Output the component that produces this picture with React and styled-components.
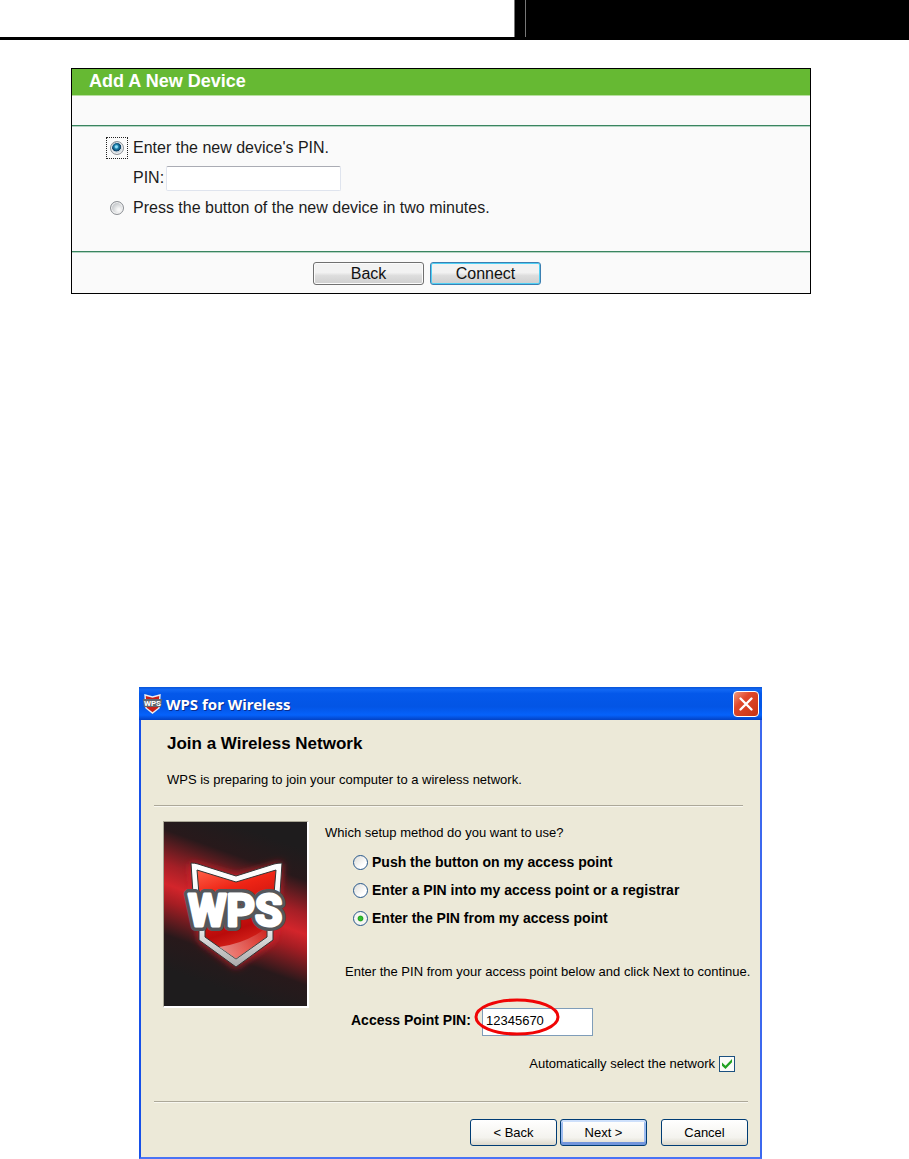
import React from "react";
import styled, { createGlobalStyle, css } from "styled-components";

const GlobalStyle = createGlobalStyle`
  * { box-sizing: border-box; }
  body { margin: 0; background: #fff; color: #000; font-family: "Liberation Sans", Arial, sans-serif; }
  button, input { font: inherit; margin: 0; }
  h1, h2, p { margin: 0; }
`;

const PageHeader = styled.header`
  display: grid;
  grid-template-columns: 514fr 11fr 384fr;
  height: 40px;
  border-bottom: 3px solid #000;
`;

const HeaderCell = styled.div`
  background: ${(p) => (p.$dark ? "#000" : "#fff")};
  border-left: ${(p) => (p.$dark ? "1px solid #777" : "0")};
`;

/* Router page: add a device */

const DevicePanel = styled.form`
  margin: 28px 98px 0 71px;
  border: 1px solid #000;
  background: #fafafa;
  font-size: 16px;
  color: #1c1c1c;
`;

const PanelTitle = styled.h1`
  height: 27px;
  padding-left: 17px;
  background: #66b933;
  border-bottom: 1px solid #b7de9f;
  color: #fff;
  font-size: 18px;
  line-height: 25px;
`;

const PanelBody = styled.div`
  margin-top: 29px;
  height: 127px;
  padding: 7px 0 0 34px;
  border: solid #3a8560;
  border-width: 1px 0;
  box-shadow: 0 1px #b5d5c4, inset 0 1px #b5d5c4;
`;

const PanelRow = styled.div`
  display: flex;
  align-items: center;
  height: 30px;
  padding-left: ${(p) => (p.$indented ? "27px" : "0")};
  gap: ${(p) => (p.$indented ? "2px" : "5px")};
`;

const FocusBox = styled.span`
  display: flex;
  align-items: center;
  justify-content: center;
  width: 22px;
  height: 22px;
  border: 1px dotted ${(p) => (p.$active ? "#222" : "transparent")};
`;

const PanelRadio = styled.input`
  appearance: none;
  width: 14px;
  height: 14px;
  border: 1px solid #8b8f94;
  border-radius: 50%;
  background: radial-gradient(circle at 65% 65%, #f8f8f8 10%, #b9bdc1 80%);
  box-shadow: inset 0 0 0 1px #f4f4f4;
  &:checked {
    background: radial-gradient(circle at 45% 40%, #8fdcf7 0 10%, #1d83ae 22%, #0b3a60 45%, #c9d4dc 50%);
  }
`;

const PanelInput = styled.input`
  width: 175px;
  height: 25px;
  padding: 0 4px;
  border: 1px solid #dfe4ee;
  border-top-color: #aaacb4;
  border-radius: 2px;
  background: #fff;
`;

const PanelFooter = styled.div`
  display: flex;
  justify-content: center;
  gap: 6px;
  padding: 10px 28px 8px 0;
`;

const PanelButton = styled.button`
  width: 111px;
  height: 23px;
  padding: 0;
  border: 1px solid ${(p) => (p.$primary ? "#3c7fb1" : "#707070")};
  border-radius: 3px;
  background: linear-gradient(#f2f2f2 0 45%, #dddddd 60%, #cfcfcf);
  box-shadow: inset 0 0 0 1px ${(p) => (p.$primary ? "#4fd0f5" : "#fbfbfb")};
  line-height: 20px;
  color: #111;
`;

/* Desktop wizard */

const Dialog = styled.section`
  margin: 393px 147px 0 139px;
  border: 2px solid #1650e8;
  border-top: 0;
  border-right-color: #3c68ee;
  border-bottom-color: #4a74f5;
  background: #ece9d8;
  font-family: "Liberation Sans", Arial, sans-serif;
  font-size: 13px;
  line-height: 16px;
`;

const TitleBar = styled.header`
  display: flex;
  align-items: center;
  height: 33px;
  margin: 0 -2px;
  padding: 1px 3px 0 4px;
  gap: 4px;
  background: linear-gradient(#0a55d8 0, #1268f4 8%, #0458ea 20%, #0355e5 60%, #0562fb 85%, #0342c4 100%);
`;

const TitleText = styled.h2`
  flex: 1;
  color: #fff;
  font-family: "Noto Sans", sans-serif;
  font-size: 15px;
  line-height: 20px;
  text-shadow: 1px 1px #0a2c8c;
`;

const CloseButton = styled.button`
  display: flex;
  align-items: center;
  justify-content: center;
  width: 26px;
  height: 26px;
  padding: 0;
  border: 1px solid #fff;
  border-radius: 4px;
  background: linear-gradient(135deg, #f09a80, #e1482b 35%, #c63313);
`;

const Intro = styled.div`
  margin: 0 17px 0 13px;
  padding: 15px 13px 17px;
  border-bottom: 1px solid #aca899;
  box-shadow: 0 1px #f8f7f0;
`;

const IntroTitle = styled.h2`
  margin-bottom: 19px;
  font-size: 17px;
  line-height: 18px;
`;

const WizardBody = styled.div`
  display: flex;
  height: 295px;
  padding: 15px 17px 0 22px;
  gap: 16px;
`;

const Artwork = styled.svg`
  display: block;
  flex: none;
  width: 146px;
  height: 187px;
  border: 1px solid #aaa796;
  border-right: 2px solid #fff;
  border-bottom: 2px solid #fff;
`;

const WizardForm = styled.div`
  flex: 1;
  min-width: 0;
  padding-top: 4px;
`;

const MethodList = styled.div`
  padding: 7px 0 0 28px;
  margin-bottom: 32px;
`;

const boldText = css`
  font-size: 14px;
  font-weight: 700;
`;

const Method = styled.label`
  ${boldText}
  display: flex;
  align-items: center;
  gap: 4px;
  height: 28px;
`;

const WizardRadio = styled.input`
  appearance: none;
  width: 15px;
  height: 15px;
  border: 1px solid #28588c;
  border-radius: 50%;
  background: linear-gradient(135deg, #dcdcd7, #fff 70%);
  &:checked {
    background: radial-gradient(circle, #2fbf2b 0 18%, #1f9d20 26%, #f5f5f1 36%);
  }
`;

const Hint = styled.p`
  padding-left: 20px;
  white-space: nowrap;
`;

const PinRow = styled.div`
  display: flex;
  align-items: center;
  margin-top: 28px;
  padding-left: 26px;
`;

const PinLabel = styled.label`
  ${boldText}
  width: 131px;
  padding-bottom: 4px;
  white-space: nowrap;
`;

const PinField = styled.div`
  position: relative;
`;

const PinInput = styled.input`
  display: block;
  width: 111px;
  height: 28px;
  padding: 0 3px 3px;
  border: 1px solid #7f9db9;
  background: #fff;
`;

const Highlight = styled.svg`
  position: absolute;
  left: -10px;
  top: -11px;
  width: 90px;
  height: 40px;
  pointer-events: none;
`;

const AutoSelect = styled.label`
  display: flex;
  align-items: center;
  justify-content: flex-end;
  gap: 4px;
  margin-top: 20px;
  padding-right: 8px;
`;

const Tick = styled.input`
  appearance: none;
  width: 16px;
  height: 16px;
  border: 1px solid #1c5180;
  background: #fbfbf8;
  display: grid;
  place-items: center;
  &:checked::before {
    content: "";
    width: 10px;
    height: 10px;
    background: #21a121;
    clip-path: polygon(0 35%, 35% 68%, 100% 0, 100% 32%, 35% 100%, 0 68%);
  }
`;

const WizardFooter = styled.footer`
  display: flex;
  justify-content: flex-end;
  gap: 3px;
  margin: 0 12px 0 13px;
  padding: 17px 0 11px;
  border-top: 1px solid #aca899;
  box-shadow: inset 0 1px #f8f7f0;
`;

const WizardButton = styled.button`
  width: 87px;
  height: 27px;
  padding: 0;
  margin-left: ${(p) => (p.$apart ? "11px" : "0")};
  border: 1px solid #003c74;
  border-radius: 3px;
  background: linear-gradient(#fff, #f4f3ee 70%, #dcd8cb);
  box-shadow: ${(p) => (p.$primary ? "inset 0 -3px #7396dc, inset 0 2px #cee0fb, inset 0 0 0 2px #9dbcf0" : "none")};
`;

const MiniShield = () => (
  <svg width="19" height="20" viewBox="0 0 19 20" aria-hidden="true">
    <path d="M2 1 L9.5 3 L17 1 L16 14 L9.5 19 L3 14 Z" fill="#c91f18" stroke="#eee" strokeWidth="1.4" />
    <path d="M0 5 H19 L18 13 H1 Z" fill="#63656b" />
    <text x="9.5" y="12" textAnchor="middle" fontFamily="Roboto, sans-serif" fontSize="8" fontWeight="700" fill="#fff">WPS</text>
  </svg>
);

const WpsArtwork = () => (
  <Artwork viewBox="0 0 143 184" role="img" aria-label="WPS">
    <defs>
      <linearGradient id="beam" gradientUnits="userSpaceOnUse" x1="98" y1="12" x2="44" y2="162">
        <stop offset="0" stopColor="#1e1c1d" />
        <stop offset="0.18" stopColor="#28191b" />
        <stop offset="0.38" stopColor="#a51f26" />
        <stop offset="0.5" stopColor="#d3252b" />
        <stop offset="0.6" stopColor="#a51d23" />
        <stop offset="0.8" stopColor="#28191b" />
        <stop offset="1" stopColor="#1e1c1d" />
      </linearGradient>
      <linearGradient id="shield" x1="0" y1="0" x2="0.3" y2="1">
        <stop offset="0" stopColor="#ff6048" />
        <stop offset="0.3" stopColor="#ee2415" />
        <stop offset="0.75" stopColor="#b90b0b" />
        <stop offset="1" stopColor="#e22c20" />
      </linearGradient>
      <linearGradient id="rim" x1="0" y1="0" x2="0" y2="1">
        <stop offset="0" stopColor="#fff" />
        <stop offset="0.6" stopColor="#eee" />
        <stop offset="1" stopColor="#aaa" />
      </linearGradient>
      <linearGradient id="shine" x1="0" y1="0" x2="1" y2="0">
        <stop offset="0" stopColor="#fff" stopOpacity="0.5" />
        <stop offset="1" stopColor="#fff" stopOpacity="0.05" />
      </linearGradient>
      <filter id="glow" x="-30%" y="-30%" width="160%" height="160%">
        <feGaussianBlur stdDeviation="4" />
      </filter>
    </defs>
    <rect width="143" height="184" fill="url(#beam)" />
    <path d="M26 41 L72 54 L118 41 L110 119 L72 145 L36 119 Z" fill="#e3222a" filter="url(#glow)" />
    <path d="M27 41 Q31 41 34 42 L72 54 L110 42 Q114 41 118 41 L116 72 L109 102 V118 L72 145 L35 118 V102 L29 72 Z" fill="url(#rim)" stroke="#333" strokeWidth="1" />
    <path d="M33 48 L72 60 L112 48 L110 72 L103 100 V115 L72 137 L41 115 V100 L35 72 Z" fill="url(#shield)" stroke="#333" strokeWidth="1" />
    <path d="M55 125 Q84 121 103 105 V115 L72 137 Z" fill="url(#shine)" />
    <g fontFamily="Roboto, sans-serif" fontSize="44" fontWeight="700" textAnchor="middle" strokeLinejoin="round">
      <text x="71" y="104" fill="#55575b" stroke="#55575b" strokeWidth="10">WPS</text>
      <text x="71" y="104" fill="#fff" stroke="#fff" strokeWidth="3">WPS</text>
    </g>
  </Artwork>
);

export default function App() {
  return (
    <>
      <GlobalStyle />
      <PageHeader>
        <HeaderCell />
        <HeaderCell $dark />
        <HeaderCell $dark />
      </PageHeader>
      <main>
        <DevicePanel onSubmit={(e) => e.preventDefault()}>
          <PanelTitle>Add A New Device</PanelTitle>
          <PanelBody>
            <PanelRow>
              <FocusBox $active><PanelRadio type="radio" id="by-pin" name="add" defaultChecked /></FocusBox>
              <label htmlFor="by-pin">Enter the new device's PIN.</label>
            </PanelRow>
            <PanelRow $indented>
              <label htmlFor="device-pin">PIN:</label>
              <PanelInput id="device-pin" type="text" />
            </PanelRow>
            <PanelRow>
              <FocusBox><PanelRadio type="radio" id="by-button" name="add" /></FocusBox>
              <label htmlFor="by-button">Press the button of the new device in two minutes.</label>
            </PanelRow>
          </PanelBody>
          <PanelFooter>
            <PanelButton type="button">Back</PanelButton>
            <PanelButton type="submit" $primary>Connect</PanelButton>
          </PanelFooter>
        </DevicePanel>

        <Dialog>
          <TitleBar>
            <MiniShield />
            <TitleText>WPS for Wireless</TitleText>
            <CloseButton type="button" aria-label="Close">
              <svg width="16" height="16" viewBox="0 0 16 16" stroke="#fff" strokeWidth="2.4" strokeLinecap="round">
                <path d="M2.5 2.5 L13.5 13.5 M13.5 2.5 L2.5 13.5" />
              </svg>
            </CloseButton>
          </TitleBar>
          <Intro>
            <IntroTitle>Join a Wireless Network</IntroTitle>
            <p>WPS is preparing to join your computer to a wireless network.</p>
          </Intro>
          <WizardBody>
            <WpsArtwork />
            <WizardForm>
              <p>Which setup method do you want to use?</p>
              <MethodList>
                <Method><WizardRadio type="radio" name="method" />Push the button on my access point</Method>
                <Method><WizardRadio type="radio" name="method" />Enter a PIN into my access point or a registrar</Method>
                <Method><WizardRadio type="radio" name="method" defaultChecked />Enter the PIN from my access point</Method>
              </MethodList>
              <Hint>Enter the PIN from your access point below and click Next to continue.</Hint>
              <PinRow>
                <PinLabel htmlFor="ap-pin">Access Point PIN:</PinLabel>
                <PinField>
                  <PinInput id="ap-pin" type="text" defaultValue="12345670" />
                  <Highlight viewBox="0 0 90 40" aria-hidden="true">
                    <ellipse cx="45" cy="20" rx="41" ry="17" fill="none" stroke="#f00505" strokeWidth="3" />
                  </Highlight>
                </PinField>
              </PinRow>
              <AutoSelect>Automatically select the network<Tick type="checkbox" defaultChecked /></AutoSelect>
            </WizardForm>
          </WizardBody>
          <WizardFooter>
            <WizardButton type="button">&lt; Back</WizardButton>
            <WizardButton type="button" $primary>Next &gt;</WizardButton>
            <WizardButton type="button" $apart>Cancel</WizardButton>
          </WizardFooter>
        </Dialog>
      </main>
    </>
  );
}
